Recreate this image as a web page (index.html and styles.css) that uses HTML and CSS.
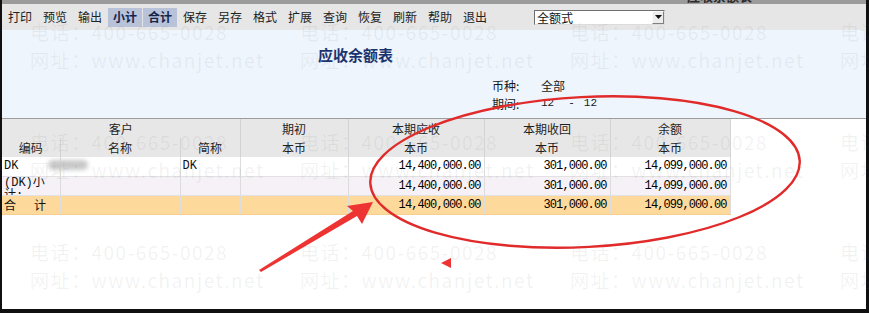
FILE: index.html
```html
<!DOCTYPE html>
<html lang="zh-CN">
<head>
<meta charset="utf-8">
<title>应收余额表</title>
<link rel="stylesheet" href="styles.css">
</head>
<body>
<div class="frame">
  <div class="topbar"><span class="toptext">应收余额表</span></div>
  <div class="toolbar">
    <span class="btn">打印</span>
    <span class="btn">预览</span>
    <span class="btn">输出</span>
    <span class="btn on">小计</span>
    <span class="btn on">合计</span>
    <span class="btn">保存</span>
    <span class="btn">另存</span>
    <span class="btn">格式</span>
    <span class="btn">扩展</span>
    <span class="btn">查询</span>
    <span class="btn">恢复</span>
    <span class="btn">刷新</span>
    <span class="btn">帮助</span>
    <span class="btn">退出</span>
    <div class="select"><span class="sel-text">全额式</span><span class="sel-arrow"><svg width="7" height="4" viewBox="0 0 7 4"><path d="M0 0H7L3.5 4Z" fill="#111"/></svg></span></div>
  </div>
  <div class="head">
    <div class="title">应收余额表</div>
    <div class="meta">
      <div class="meta-row"><span class="lbl">币种:</span><span class="val">全部</span></div>
      <div class="meta-row"><span class="lbl">期间:</span><span class="num">12</span><span class="num dash">-</span><span class="num">12</span></div>
    </div>
  </div>
  <table class="grid">
    <colgroup>
      <col class="c1"><col class="c2"><col class="c3"><col class="c4"><col class="c5"><col class="c6"><col class="c7">
    </colgroup>
    <thead>
      <tr>
        <th colspan="3">客户</th>
        <th>期初</th>
        <th>本期应收</th>
        <th>本期收回</th>
        <th>余额</th>
      </tr>
      <tr>
        <th>编码</th>
        <th>名称</th>
        <th>简称</th>
        <th>本币</th>
        <th>本币</th>
        <th>本币</th>
        <th>本币</th>
      </tr>
    </thead>
    <tbody>
      <tr class="r1">
        <td class="txt">DK</td>
        <td></td>
        <td class="txt">DK</td>
        <td></td>
        <td class="amt">14,400,000.00</td>
        <td class="amt">301,000.00</td>
        <td class="amt">14,099,000.00</td>
      </tr>
      <tr class="r2">
        <td class="txt"><div class="wrap">(DK)小计:</div></td>
        <td></td>
        <td></td>
        <td></td>
        <td class="amt">14,400,000.00</td>
        <td class="amt">301,000.00</td>
        <td class="amt">14,099,000.00</td>
      </tr>
      <tr class="r3">
        <td class="txt total">合<span class="gap"></span>计</td>
        <td></td>
        <td></td>
        <td></td>
        <td class="amt">14,400,000.00</td>
        <td class="amt">301,000.00</td>
        <td class="amt">14,099,000.00</td>
      </tr>
    </tbody>
  </table>
</div>

<div class="blur"></div>

<div class="watermark">
  <div class="wm"><span>电话：400-665-0028</span><span>网址：www.chanjet.net</span></div>
  <div class="wm"><span>电话：400-665-0028</span><span>网址：www.chanjet.net</span></div>
  <div class="wm"><span>电话：400-665-0028</span><span>网址：www.chanjet.net</span></div>
  <div class="wm"><span>电话：400-665-0028</span><span>网址：www.chanjet.net</span></div>
  <div class="wm"><span>电话：400-665-0028</span><span>网址：www.chanjet.net</span></div>
  <div class="wm"><span>电话：400-665-0028</span><span>网址：www.chanjet.net</span></div>
  <div class="wm"><span>电话：400-665-0028</span><span>网址：www.chanjet.net</span></div>
  <div class="wm"><span>电话：400-665-0028</span><span>网址：www.chanjet.net</span></div>
  <div class="wm"><span>电话：400-665-0028</span><span>网址：www.chanjet.net</span></div>
  <div class="wm"><span>电话：400-665-0028</span><span>网址：www.chanjet.net</span></div>
  <div class="wm"><span>电话：400-665-0028</span><span>网址：www.chanjet.net</span></div>
  <div class="wm"><span>电话：400-665-0028</span><span>网址：www.chanjet.net</span></div>
</div>

<svg class="marks" width="869" height="313" viewBox="0 0 869 313">
  <ellipse cx="585" cy="172" rx="215" ry="75" transform="rotate(-3 585 172)" fill="none" stroke="#e12a2a" stroke-width="2.4"/>
  <polygon points="259,270 353,211 347,206 373,202 362,224 357,216 261,272" fill="#ee3333"/>
  <polygon points="441,263 451,258 451,268" fill="#ee3333"/>
</svg>
</body>
</html>
```

FILE: styles.css
```css
html, body {
  margin: 0;
  padding: 0;
}

body {
  position: relative;
  width: 869px;
  height: 313px;
  overflow: hidden;
  background: #ffffff;
  font-family: "Noto Sans CJK SC", "Noto Sans", sans-serif;
  font-size: 12px;
  color: #1a1a1a;
}

.frame {
  box-sizing: border-box;
  width: 869px;
  height: 313px;
  border-left: 2px solid #101010;
  border-right: 3px solid #101010;
  border-bottom: 4px solid #101010;
  background: #ffffff;
  overflow: hidden;
}

.topbar {
  height: 4px;
  background: #9b9b9b;
  overflow: hidden;
}

.toptext {
  display: block;
  margin-left: 685px;
  margin-top: -12px;
  font-size: 13px;
  font-weight: bold;
  line-height: 15px;
  color: #2a2a2a;
}

.toolbar {
  display: flex;
  align-items: center;
  height: 26px;
  padding-left: 1px;
  gap: 1px;
  background: #e6e6e6;
}

.btn {
  width: 34px;
  height: 19px;
  display: flex;
  align-items: center;
  justify-content: center;
  font-size: 12px;
  line-height: 1;
  color: #222;
}

.btn.on {
  background: #b8c2d9;
  font-weight: bold;
  color: #15254a;
}

.select {
  margin-left: 41px;
  width: 131px;
  height: 15px;
  box-sizing: border-box;
  display: flex;
  align-items: center;
  justify-content: space-between;
  background: #ffffff;
  border: 1px solid;
  border-color: #6f6f6f #dcdcdc #dcdcdc #6f6f6f;
}

.sel-text {
  font-size: 12px;
  line-height: 13px;
  padding-left: 2px;
  color: #111;
}

.sel-arrow {
  width: 12px;
  height: 13px;
  box-sizing: border-box;
  display: flex;
  align-items: center;
  justify-content: center;
  background: #ececec;
  border: 1px solid;
  border-color: #fafafa #808080 #808080 #fafafa;
}

.head {
  height: 88px;
  background: #eef5fd;
  border-bottom: 1px solid #9d9d9d;
}

.title {
  padding-top: 15px;
  padding-left: 316px;
  font-size: 15px;
  font-weight: bold;
  line-height: 20px;
  color: #1b3470;
}

.meta {
  margin-top: 11px;
  margin-left: 490px;
}

.meta-row {
  display: flex;
  align-items: center;
  height: 18px;
  font-size: 12px;
  color: #1a1a1a;
}

.lbl {
  width: 49px;
}

.num {
  font-family: "Liberation Mono", monospace;
  font-size: 11px;
}

.num.dash {
  margin: 0 9px 0 14px;
}

.grid {
  border-collapse: collapse;
  table-layout: fixed;
  width: 728px;
}

.c1 { width: 58px; }
.c2 { width: 120px; }
.c3 { width: 60px; }
.c4 { width: 108px; }
.c5 { width: 136px; }
.c6 { width: 126px; }
.c7 { width: 120px; }

.grid th {
  height: 19px;
  padding: 0;
  background: #e7e7e7;
  font-size: 12px;
  font-weight: normal;
  line-height: 19px;
  text-align: center;
  color: #1f1f1f;
  border-right: 1px solid #d3d3d3;
  box-sizing: border-box;
}

.grid td {
  height: 19px;
  padding: 0;
  box-sizing: border-box;
  border-right: 1px solid #dcdcdc;
  border-bottom: 1px solid #e2e2e2;
  line-height: 18px;
  white-space: nowrap;
  overflow: hidden;
  vertical-align: middle;
}

.grid .r1 td { background: #ffffff; }
.grid .r2 td { background: #f5f1f6; }
.grid .r3 td { background: #fdd99b; border-bottom-color: #f4cf90; }

.txt {
  padding-left: 2px !important;
  font-family: "Liberation Mono", "Noto Sans CJK SC", monospace;
  font-size: 12px;
  color: #111;
}

.wrap {
  white-space: normal;
  width: 50px;
  height: 18px;
  overflow: hidden;
  line-height: 13px;
  padding-top: 0;
  box-sizing: border-box;
  word-break: break-all;
}

.total {
  font-family: "Noto Sans CJK SC", sans-serif;
}

.gap {
  display: inline-block;
  width: 18px;
}

.amt {
  text-align: right;
  padding-right: 3px !important;
  font-family: "Liberation Mono", monospace;
  font-size: 12px;
  letter-spacing: -0.9px;
  color: #000;
}

.blur {
  position: absolute;
  left: 48px;
  top: 160px;
  width: 40px;
  height: 10px;
  border-radius: 6px;
  background: #c9c9c9;
  filter: blur(2px);
}

.watermark {
  position: absolute;
  left: 0;
  top: 0;
  width: 869px;
  height: 313px;
  overflow: hidden;
  padding: 18px 0 0 30px;
  box-sizing: border-box;
  display: grid;
  grid-template-columns: repeat(4, 270px);
  grid-auto-rows: 110px;
  pointer-events: none;
}

.wm {
  display: flex;
  flex-direction: column;
  white-space: nowrap;
  font-family: "Noto Sans CJK SC", sans-serif;
  font-size: 19px;
  line-height: 28px;
  letter-spacing: 1.5px;
  color: rgba(110, 110, 110, 0.09);
}

.marks {
  position: absolute;
  left: 0;
  top: 0;
  pointer-events: none;
}
```
